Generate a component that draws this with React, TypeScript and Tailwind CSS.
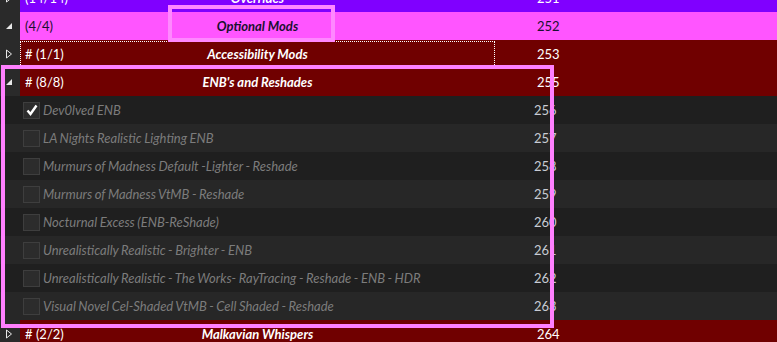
import React from 'react';

type Child = { name: string; priority: number; checked?: boolean };

const enbChildren: Child[] = [
  { name: 'Dev0lved ENB', priority: 256, checked: true },
  { name: 'LA Nights Realistic Lighting ENB', priority: 257 },
  { name: 'Murmurs of Madness Default -Lighter - Reshade', priority: 258 },
  { name: 'Murmurs of Madness VtMB - Reshade', priority: 259 },
  { name: 'Nocturnal Excess (ENB-ReShade)', priority: 260 },
  { name: 'Unrealistically Realistic - Brighter - ENB', priority: 261 },
  { name: 'Unrealistically Realistic - The Works- RayTracing - Reshade - ENB - HDR', priority: 262 },
  { name: 'Visual Novel Cel-Shaded VtMB - Cell Shaded - Reshade', priority: 263 },
];

function Expander({ open }: { open: boolean }) {
  if (open) {
    return (
      <svg width="8" height="8" viewBox="0 0 8 8" className="ml-[5px]">
        <path d="M7 1 L7 7 L1 7 Z" fill="#e8e8e8" />
      </svg>
    );
  }
  return (
    <svg width="8" height="10" viewBox="0 0 8 10" className="ml-[5px]">
      <path d="M1.5 1 L6.5 5 L1.5 9 Z" fill="none" stroke="#e8e8e8" strokeWidth="1" />
    </svg>
  );
}

function SeparatorRow({
  count,
  title,
  priority,
  bg,
  dark,
  open,
  focused,
  hash = true,
}: {
  count: string;
  title: string;
  priority: number;
  bg: string;
  dark?: boolean;
  open: boolean;
  focused?: boolean;
  hash?: boolean;
}) {
  const text = dark ? 'text-[#1a1030]' : 'text-white';
  return (
    <div className="flex h-[28px] items-center">
      <div className="flex h-full w-[20px] shrink-0 items-center bg-[#2a2a2a]">
        <Expander open={open} />
      </div>
      <div className={`flex h-full flex-1 items-center pt-[2px] ${bg} ${text}`}>
        <div
          className={`relative flex h-full w-[475px] shrink-0 items-center ${
            focused ? '-mt-[2px] border border-dotted border-white pt-[2px]' : ''
          }`}
        >
          <span className={`${focused ? 'pl-[4px]' : 'pl-[5px]'} text-[13px]`}>
            {hash ? '# ' : ''}
            {count}
          </span>
          <span className="absolute left-0 right-0 text-center text-[13px] font-bold italic">{title}</span>
        </div>
        <span className="pl-[42px] text-[13px]">{priority}</span>
      </div>
    </div>
  );
}

function ChildRow({ child, odd }: { child: Child; odd: boolean }) {
  return (
    <div className={`flex h-[28px] items-center ${odd ? 'bg-[#272727]' : 'bg-[#1f1f1f]'}`}>
      <div className="w-[23px] shrink-0" />
      <div className="flex h-[17px] w-[17px] shrink-0 items-center justify-center border border-[#3e3e3e] bg-[#2c2c2c]">
        {child.checked && (
          <svg width="12" height="12" viewBox="0 0 12 12">
            <path d="M1.5 6.5 L4.5 10 L10.5 1.5" fill="none" stroke="#ffffff" strokeWidth="2.4" />
          </svg>
        )}
      </div>
      <span className="w-[475px] shrink-0 truncate pl-[3px] pt-[2px] text-[13px] italic text-[#7c7c7c] [word-spacing:-0.5px]">
        {child.name}
      </span>
      <span className="pl-[19px] pt-[2px] text-[13px] text-[#c8ccd4]">{child.priority}</span>
    </div>
  );
}

export default function App() {
  return (
    <div
      className="relative h-[342px] w-[777px] overflow-hidden bg-[#1f1f1f]"
      style={{ fontFamily: '"Lato", "Open Sans", sans-serif' }}
    >
      <div className="-mt-[16px] flex flex-col">
        <SeparatorRow count="(14/14)" title="Overrides" priority={251} bg="bg-[#8000ff]" open={false} hash={false} />
        <SeparatorRow count="(4/4)" title="Optional Mods" priority={252} bg="bg-[#ff55ff]" dark open hash={false} />
        <SeparatorRow count="(1/1)" title="Accessibility Mods" priority={253} bg="bg-[#700000]" open={false} focused />
        <SeparatorRow count="(8/8)" title="ENB's and Reshades" priority={255} bg="bg-[#700000]" open />
        {enbChildren.map((c, i) => (
          <ChildRow key={c.name} child={c} odd={i % 2 === 1} />
        ))}
        <SeparatorRow count="(2/2)" title="Malkavian Whispers" priority={264} bg="bg-[#700000]" open={false} />
      </div>

      {/* highlight annotations */}
      <div className="absolute left-[168px] top-[5px] h-[37px] w-[167px] border-[4px] border-[#ff88ff]" />
      <div className="absolute left-[1px] top-[65px] h-[263px] w-[553px] border-[4px] border-[#ff80ff]" />
    </div>
  );
}
